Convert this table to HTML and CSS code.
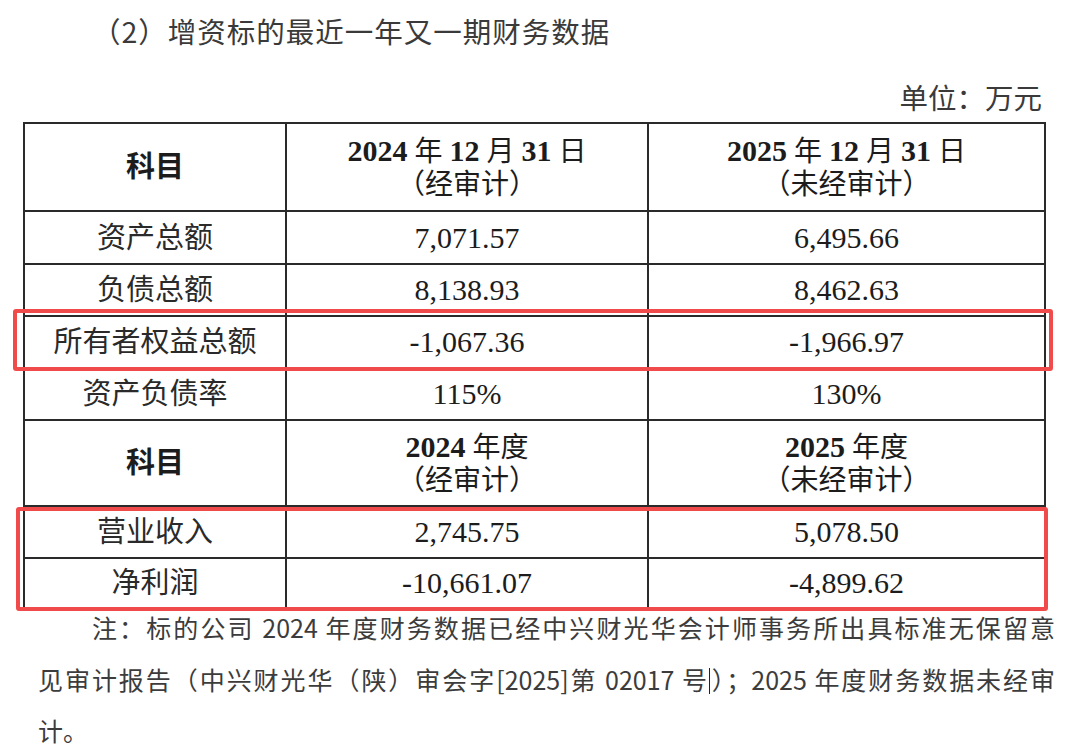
FILE: index.html
```html
<!DOCTYPE html>
<html lang="zh-CN">
<head>
<meta charset="utf-8">
<title>增资标的财务数据</title>
<link rel="stylesheet" href="styles.css">
</head>
<body>
<div class="page">
  <h2 class="title">（2）增资标的最近一年又一期财务数据</h2>
  <div class="unit">单位：万元</div>
  <div class="table-wrap">
    <table class="fin">
      <colgroup>
        <col class="c1"><col class="c2"><col class="c3">
      </colgroup>
      <tr class="head">
        <th class="subj">科目</th>
        <th><b>2024</b> 年 <b>12</b> 月 <b>31</b> 日<br>（经审计）</th>
        <th><b>2025</b> 年 <b>12</b> 月 <b>31</b> 日<br>（未经审计）</th>
      </tr>
      <tr class="r1"><td>资产总额</td><td class="num">7,071.57</td><td class="num">6,495.66</td></tr>
      <tr class="r2"><td>负债总额</td><td class="num">8,138.93</td><td class="num">8,462.63</td></tr>
      <tr class="r3"><td>所有者权益总额</td><td class="num">-1,067.36</td><td class="num">-1,966.97</td></tr>
      <tr class="r4"><td>资产负债率</td><td class="num">115%</td><td class="num">130%</td></tr>
      <tr class="head head2">
        <th class="subj">科目</th>
        <th><b>2024</b> 年度<br>（经审计）</th>
        <th><b>2025</b> 年度<br>（未经审计）</th>
      </tr>
      <tr class="r5"><td>营业收入</td><td class="num">2,745.75</td><td class="num">5,078.50</td></tr>
      <tr class="r6"><td>净利润</td><td class="num">-10,661.07</td><td class="num">-4,899.62</td></tr>
    </table>
    <div class="mark mark1"></div>
    <div class="mark mark2"></div>
  </div>
  <div class="note">
    <div class="line first">注：标的公司 2024 年度财务数据已经中兴财光华会计师事务所出具标准无保留意</div>
    <div class="line">见审计报告（中兴财光华（陕）审会字[2025]第 02017 号<span class="caret"></span>）；2025 年度财务数据未经审</div>
    <div class="line last">计。</div>
  </div>
</div>
</body>
</html>
```

FILE: styles.css
```css
html, body {
  margin: 0;
  padding: 0;
  background: #ffffff;
}

.page {
  width: 1080px;
  height: 752px;
  overflow: hidden;
  font-family: "Noto Sans CJK SC", "Liberation Serif", serif;
  color: #333;
}

.title {
  margin: 11px 0 0 0;
  padding-left: 92px;
  font-size: 28.5px;
  line-height: 40px;
  font-weight: normal;
  letter-spacing: 1px;
  color: #3a3a3a;
}

.unit {
  margin-top: 26px;
  padding-right: 38px;
  text-align: right;
  font-size: 28.5px;
  line-height: 40px;
  color: #3a3a3a;
}

.table-wrap {
  position: relative;
  margin: 5px 0 0 23px;
  width: 1021px;
}

.fin {
  border-collapse: collapse;
  width: 1021px;
  table-layout: fixed;
  font-family: "Liberation Serif", "Noto Sans CJK SC", serif;
  font-size: 30px;
  color: #1c1c1c;
}

.fin .c1 { width: 262px; }
.fin .c2 { width: 362px; }
.fin .c3 { width: 397px; }

.fin th,
.fin td {
  border: 2px solid #2a2a2a;
  padding: 0;
  text-align: center;
  vertical-align: middle;
}

.fin th {
  font-weight: normal;
  line-height: 33px;
  font-size: 28px;
}

.fin th b {
  font-weight: bold;
  font-size: 30px;
}

.fin th.subj {
  font-weight: bold;
  font-size: 29px;
}

.fin td {
  line-height: 34px;
  font-size: 29px;
  color: #2a2a2a;
}

.fin td.num {
  font-size: 30px;
  color: #1c1c1c;
}

.fin tr.head { height: 88px; }
.fin tr.head2 { height: 86px; }
.fin tr.r1 { height: 53px; }
.fin tr.r2 { height: 52px; }
.fin tr.r3 { height: 52px; }
.fin tr.r4 { height: 52px; }
.fin tr.r5 { height: 52px; }
.fin tr.r6 { height: 50px; }

.mark {
  position: absolute;
  border: 4px solid #f04a4a;
  border-radius: 3px;
  box-sizing: border-box;
}

.mark1 {
  left: -10px;
  top: 187px;
  width: 1040px;
  height: 62px;
}

.mark2 {
  left: -7px;
  top: 385px;
  width: 1032px;
  height: 104px;
}

.note {
  margin: -7px 0 0 38px;
  width: 1017px;
  font-size: 25px;
  line-height: 51.5px;
  color: #3c3c3c;
}

.note .line {
  text-align: justify;
  text-align-last: justify;
  white-space: nowrap;
}

.note .line.first {
  text-indent: 54px;
}

.note .line.last {
  text-align-last: left;
}

.caret {
  display: inline-block;
  width: 1px;
  height: 26px;
  background: #222;
  vertical-align: -4px;
}
```
